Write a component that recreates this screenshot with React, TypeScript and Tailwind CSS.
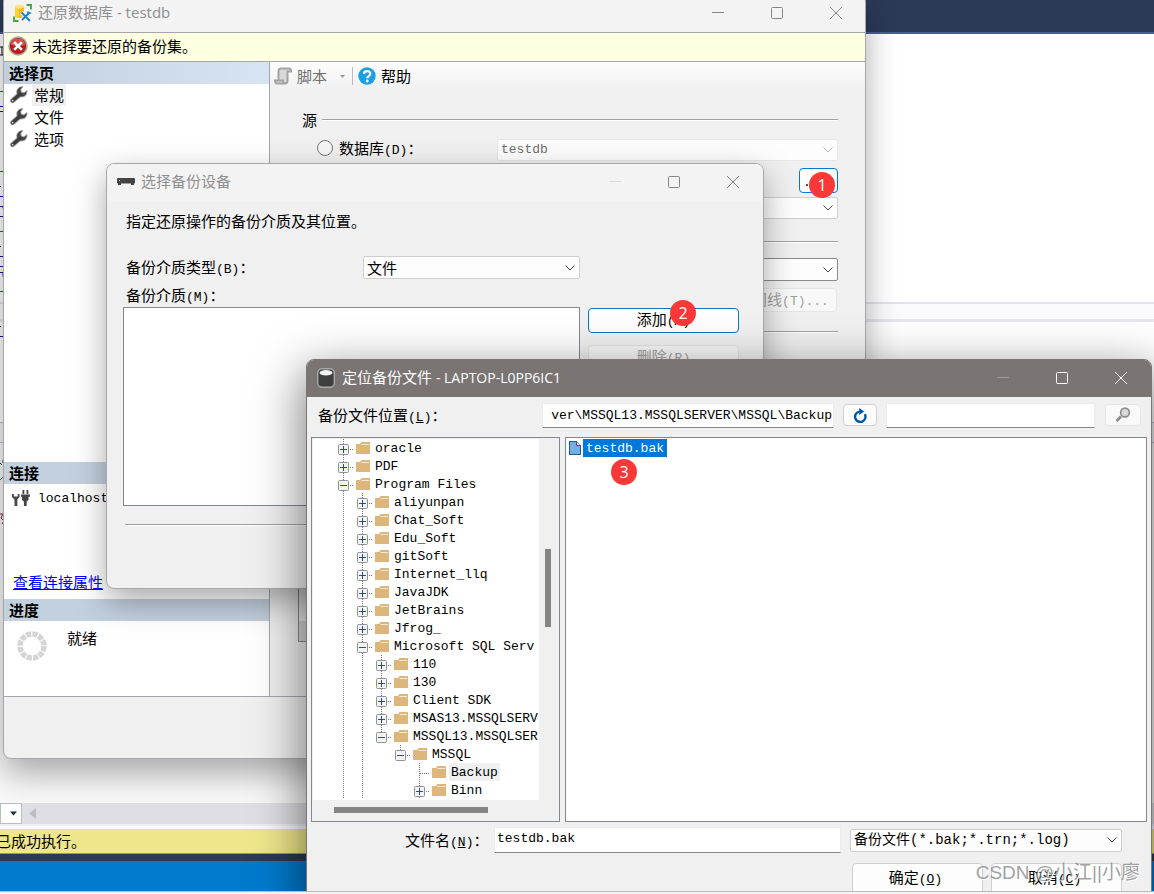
import type { ReactNode } from 'react'

const Latin = ({ children }: { children: ReactNode }) => (
  <span className="font-['Liberation_Mono','Noto_Sans_CJK_SC',monospace] text-[13px] leading-none">{children}</span>
)

const Chevron = ({ className }: { className: string }) => (
  <svg viewBox="0 0 12 12" className={`pointer-events-none absolute right-1 top-1/2 h-3 w-3 -translate-y-1/2 ${className}`} fill="none" stroke="currentColor">
    <path d="M1.5 3.5 6 8 10.5 3.5" />
  </svg>
)

function Select({ value, label, box, text, disabled }: { value: string; label: string; box: string; text: string; disabled?: boolean }) {
  return (
    <div className={`relative ${box}`}>
      <select
        aria-label={label}
        disabled={disabled}
        className={`block h-full w-full appearance-none rounded-[2px] border bg-[#fdfdfd] pl-[3px] pr-5 opacity-100 ${text}`}
      >
        <option>{value}</option>
      </select>
      <Chevron className={disabled ? 'text-[#b5b5b5]' : 'text-[#444]'} />
    </div>
  )
}

function WindowControls({ color, minColor }: { color: string; minColor: string }) {
  return (
    <div className="ml-auto flex h-full">
      <button aria-label="最小化" className={`grid w-[59px] place-items-center ${minColor}`}>
        <svg width="14" height="14" viewBox="0 0 14 14" stroke="currentColor"><path d="M1 6.5h12" /></svg>
      </button>
      <button aria-label="最大化" className={`grid w-[59px] place-items-center ${color}`}>
        <svg width="14" height="14" viewBox="0 0 14 14" fill="none" stroke="currentColor"><rect x="1.5" y="1.5" width="11" height="11" rx="1" /></svg>
      </button>
      <button aria-label="关闭" className={`grid w-[59px] place-items-center ${color}`}>
        <svg width="14" height="14" viewBox="0 0 14 14" stroke="currentColor"><path d="M1 1l12 12M13 1L1 13" /></svg>
      </button>
    </div>
  )
}

const Wrench = () => (
  <svg width="18" height="18" viewBox="0 0 18 18" className="shrink-0">
    <path d="M2.600 14.600 9 9" stroke="#9a9a9a" strokeWidth="5" strokeLinecap="round" />
    <path d="M12.800 .8A5.200 5.200 0 0 0 7 7.400c.6 3 3.400 4 5.800 3.400 2.600-.6 4.400-2.600 4.200-6.200l-3.200 2.300-2.700-.9-.3-2.700z" fill="#444" stroke="#9a9a9a" strokeWidth=".9" />
    <path d="M2.500 14.700 9.300 8.900" stroke="#3c3c3c" strokeWidth="3.400" strokeLinecap="round" />
    <circle cx="2.600" cy="14.600" r=".9" fill="#ddd" />
  </svg>
)

const PanelHead = ({ children, fade }: { children: ReactNode; fade?: boolean }) => (
  <h2 className={`h-[22px] pl-[5px] text-[15px] font-bold leading-[22px] ${fade ? 'bg-linear-to-r from-[#c1cfde] to-[#d7e5f3]' : 'bg-[#c3d0de]'}`}>{children}</h2>
)

const Rule = ({ className = '' }: { className?: string }) => (
  <div className={`h-[2px] border-t border-[#a0a0a0] bg-white ${className}`} />
)

function Editor() {
  return (
    <div className="flex h-full flex-col bg-white">
      <div className="h-[34px] shrink-0 border-b-2 border-[#4a5f8f] bg-[#2b3a57]" />
      <div className="h-[268px] shrink-0">
        <svg width="5" height="268" viewBox="0 34 5 268" fill="none">
          <path d="M0 47h5M0 55h5M2 47v8" stroke="#111" />
          <path d="M0 91.500h5M0 171.500h5M0 231.500h5M0 291.500h5" stroke="#078007" />
          <path d="M0 106.500h5M0 111.500h4v5M0 186.500h1M0 196.500h5M0 206.500h3v2M0 216.500h5M0 246.500h1M0 256.500h5M0 266.500h4v3M0 272.500h3v4" stroke="#11c" />
        </svg>
      </div>
      <div className="h-[2px] shrink-0 bg-[#e2e2ea]" />
      <div className="h-[15px] shrink-0 bg-[#fbfbfd]" />
      <div className="h-[3px] shrink-0 bg-[#e6e6ec]" />
      <div className="h-[100px] shrink-0 bg-white">
        <svg width="5" height="30" viewBox="0 322 5 30" fill="none"><path d="M0 326.500h1M0 336.500h5" stroke="#11c" /></svg>
      </div>
      <div className="h-[21px] shrink-0 border-y border-[#b9bccb] bg-[#f3f3f6]" />
      <div className="flex-1 bg-[#f8f8f8]">
        <svg width="5" height="90" viewBox="0 443 5 90" fill="none">
          <path d="M0 463l2 2M3 460v3" stroke="#222" />
          <path d="M0 480l3-3" stroke="#27a" />
          <path d="M0 514h3l-2 4 3 3-2 3" stroke="#824" />
        </svg>
      </div>
      <div className="flex h-[21px] shrink-0 bg-[#dedee4]">
        <div className="flex w-[22px] items-center justify-end border border-[#b5bccb] bg-white pr-1">
          <svg width="7" height="5" viewBox="0 0 7 5"><path d="M0 .5h7L3.500 4.500z" fill="#1b2b47" /></svg>
        </div>
        <svg width="22" height="21" viewBox="0 0 22 21"><path d="M14 5v11L7 10.500z" fill="#bcbcc4" /></svg>
      </div>
      <div className="h-[5px] shrink-0 border-t-2 border-[#eeeef2] bg-[#f8f8fa]" />
      <div className="h-[25px] shrink-0 border-b border-[#8f93a0] bg-[#efe68c] text-[15px] leading-[24px] text-black">
        <span className="-ml-1">已成功执行。</span>
      </div>
      <div className="h-[7px] shrink-0 bg-[#2b3a57]" />
      <div className="h-[30px] shrink-0 bg-[#007acc]" />
    </div>
  )
}

function RestoreWindow() {
  return (
    <section className="absolute -top-1.5 left-[3px] flex h-[765px] w-[863px] flex-col overflow-hidden rounded-lg border border-[#a6a6ac] bg-[#f0f0f0] shadow-[0_14px_32px_rgba(0,0,0,0.32)]">
      <header className="flex h-[37px] shrink-0 items-center bg-[#f3f3f3] pb-0.5 pl-[9px]">
        <svg width="20" height="20" viewBox="0 0 20 20">
          <path d="M2 3.500v10c0 2 9 2 9 0v-10z" fill="#fdb813" />
          <path d="M2 3.500h4v11.300c-2-.1-4-.5-4-1.300z" fill="#ffcf3f" />
          <ellipse cx="6.500" cy="3.500" rx="4.500" ry="2" fill="#ffe28a" />
          <path d="M13.500 2H18v4.500M1 13.500V18h4.500" fill="none" stroke="#3fa24c" strokeWidth="1.800" />
          <path d="M8.500 9.500 17 18M16.500 9.500 9 17" stroke="#f3f3f3" strokeWidth="4" />
          <path d="M8.500 9.500 17 18M16.500 9.500 9 17" stroke="#1a84cf" strokeWidth="1.900" />
          <path d="M14 9.500c2-1 3 0 4 1" stroke="#1a84cf" strokeWidth="1.500" fill="none" />
        </svg>
        <h1 className="pl-[5px] text-[15px] text-[#8f8f8f] font-['Open_Sans','Noto_Sans_CJK_SC',sans-serif]">
          还原数据库 - testdb
        </h1>
        <WindowControls color="text-[#858585]" minColor="text-[#858585]" />
      </header>
      <div className="flex h-[30px] shrink-0 items-center gap-1 border-y border-[#a5a5ac] bg-[#ffffe1] pb-0.5 pl-1 text-[15px]">
        <svg width="20" height="20" viewBox="0 0 19 19">
          <circle cx="9.500" cy="9.500" r="9.200" fill="#a5a5a5" />
          <circle cx="9.500" cy="9.500" r="7.700" fill="#c01818" />
          <path d="M2.500 8a7.200 7.200 0 0 1 14 0q-7 4-14 0z" fill="#dd6a6a" opacity=".7" />
          <path d="M5.800 5.800l7.400 7.400M13.200 5.800l-7.400 7.400" stroke="#fff" strokeWidth="2.600" />
        </svg>
        未选择要还原的备份集。
      </div>
      <div className="flex h-[635px] shrink-0 border-b border-[#a5a5ac]">
        <aside className="flex w-[266px] shrink-0 flex-col border-r border-[#a5a5ac] bg-white text-[15px]">
          <PanelHead fade>选择页</PanelHead>
          <ul>
            {['常规', '文件', '选项'].map((t, i) => (
              <li key={t} className="flex h-[22px] items-center gap-1 pl-[6px]">
                <Wrench />
                <span className={`h-[22px] px-[2px] leading-[22px] ${i === 0 ? 'bg-[#f0f0f0]' : ''}`}>{t}</span>
              </li>
            ))}
          </ul>
          <div className="mt-auto h-[137px]">
            <PanelHead>连接</PanelHead>
            <div className="flex h-[28px] items-center gap-2 pl-2">
              <svg width="18" height="16" viewBox="0 0 18 16" fill="#444">
                <path d="M0 4v3l2.500 2.500V16h2.800V9.500L7.500 7V4H5.800v2.500h-4V4zM9 4.500h9v2l-1.500.5v3l-1.800 1.500V16h-2.800v-4.500L10 10V7l-1-.5z" />
                <path d="M10.500 0h1.800v4h-1.800zM14.500 0h1.800v4h-1.800z" />
              </svg>
              <Latin>localhost</Latin>
            </div>
            <a href="#connection" className="ml-[9px] mt-[59px] inline-block leading-[22px] text-[#0000ff] underline">查看连接属性</a>
          </div>
          <PanelHead>进度</PanelHead>
          <div className="flex h-[75px] pl-[13px]">
            <svg width="30" height="30" viewBox="0 0 30 30" className="mt-2.5">
              <circle cx="15" cy="15" r="12" fill="none" stroke="#d5d5d5" strokeWidth="5.500" strokeDasharray="5.200 1.080" />
            </svg>
            <span className="pl-[20px] pt-[6px]">就绪</span>
          </div>
        </aside>
        <div className="flex flex-1 flex-col">
          <div className="flex h-7 shrink-0 items-center rounded-tr bg-linear-to-b from-[#fdfdfd] to-[#f0f0f0] pl-1 text-[15px]">
            <button className="flex items-center gap-[5px] text-[#6f6f6f]">
              <svg width="18" height="18" viewBox="0 0 18 18" fill="#d8d8d8" stroke="#a3a3a3" strokeWidth="2">
                <path d="M4.500 13V4c0-2 1-2.500 2.500-2.500h8.500c1 0 1.500 1 1.500 3h-3.500v9c0 2-1 3-2.500 3H3c-1.500 0-2-1-2-3h8c0 2 .5 3 2 3" />
              </svg>
              脚本
              <svg width="5" height="3" viewBox="0 0 7 4" className="ml-2"><path d="M0 0h7L3.500 4z" fill="#999" /></svg>
            </button>
            <span className="ml-[7px] h-[18px] w-px bg-[#bdbdbd]" />
            <button className="ml-[5px] flex items-center gap-[5px] text-black">
              <svg width="18" height="18" viewBox="0 0 18 18">
                <circle cx="9" cy="9" r="8.700" fill="#1ba1e2" />
                <path d="M6 7c0-4 6.200-3.800 6.200-.3C12.200 9 9.200 9 9.200 11.200" fill="none" stroke="#fff" strokeWidth="2.200" />
                <circle cx="9.200" cy="14" r="1.400" fill="#fff" />
              </svg>
              帮助
            </button>
          </div>
          <div className="flex flex-1 flex-col pl-8 pr-[27px] pt-[20px] text-[15px]">
            <div className="flex h-5 items-center gap-1">源<Rule className="ml-[1px] flex-1" /></div>
            <div className="mt-[9px] flex h-[22px] items-start justify-between pl-[15px]">
              <label className="flex h-[18px] items-center gap-[6px]">
                <input type="radio" name="source" className="h-4 w-4 appearance-none rounded-full border border-[#777] bg-[#f5f5f5]" />
                <span className="leading-[18px]">数据库<Latin>(D)</Latin>：</span>
              </label>
              <Select label="数据库" value="testdb" disabled box="h-[22px] w-[341px]" text="border-[#e6e6e6] font-['Liberation_Mono',monospace] text-[13px] text-[#6d6d6d]" />
            </div>
            <button aria-label="选择设备" className="ml-auto mt-[7px] h-[25px] w-[39px] rounded border border-[#0078d4] bg-[#fdfdfd] pl-[3px] text-left leading-none"><Latin>...</Latin></button>
            <Select label="源数据库" value="" box="mt-[4px] h-[22px]" text="border-[#cfcfcf] text-[13px]" />
            <Rule className="mt-[22px]" />
            <Select label="目标数据库" value="" box="mt-[15px] h-[23px]" text="border-[#8a8a8a] text-[13px]" />
            <button disabled className="ml-auto mr-px mt-[7px] h-6 w-[108px] rounded border border-[#e6e6e6] bg-[#f8f8f8] pb-0.5 leading-none text-[#a0a0a0]">时间线<Latin>(T)...</Latin></button>
            <Rule className="mt-[19px]" />
            <div className="-ml-1 mt-auto mb-[54px] h-[190px] border border-[#8a8a94] bg-[#f0f0f0]">
              <div className="mt-[168px] h-5 bg-[#d8d8d8]" />
            </div>
          </div>
        </div>
      </div>
    </section>
  )
}

function DeviceWindow() {
  return (
    <section className="absolute left-[106px] top-[163px] flex h-[426px] w-[658px] flex-col overflow-hidden rounded-lg border border-[#a8a8a8] bg-[#f0f0f0] shadow-[0_12px_32px_rgba(0,0,0,0.34)]">
      <header className="flex h-[37px] shrink-0 items-center bg-[#f3f3f3] pb-0.5 pl-2.5 pr-px">
        <svg width="18" height="7" viewBox="0 0 18 7"><rect width="18" height="5.500" rx="1" fill="#444" /><path d="M1 5h3v2H1zM14 5h3v2h-3z" fill="#444" /><path d="M2 2h1v1H2z" fill="#ccc" /></svg>
        <h1 className="pl-[6px] text-[15px] text-[#8f8f8f]">选择备份设备</h1>
        <WindowControls color="text-[#858585]" minColor="text-[#dadada]" />
      </header>
      <div className="flex flex-col pl-4 pr-[24px] text-[15px]">
        <p className="mt-[11px] h-5 pl-[3px] leading-[18px]">指定还原操作的备份介质及其位置。</p>
        <div className="mt-[24px] flex h-[23px] items-center pl-[3px]">
          <label className="w-[237px]">备份介质类型<Latin>(B)</Latin>：</label>
          <Select label="备份介质类型" value="文件" box="h-[23px] w-[217px]" text="border-[#cfcfcf] text-[15px]" />
        </div>
        <div className="mt-[6px] h-5 pl-[3px] leading-[20px]">备份介质<Latin>(M)</Latin>：</div>
        <div className="mt-[2px] flex gap-2">
          <div className="h-[199px] w-[457px] shrink-0 border border-[#828790] bg-white" />
          <div className="flex flex-1 flex-col gap-3 pt-px">
            <button className="h-[25px] rounded border border-[#0078d4] bg-[#fdfdfd] pb-0.5 leading-none">添加<Latin>(A)</Latin></button>
            <button disabled className="h-[25px] rounded border border-[#e4e4e4] bg-[#f8f8f8] pb-0.5 leading-none text-[#a0a0a0]">删除<Latin>(R)</Latin></button>
          </div>
        </div>
        <Rule className="ml-[2px] mt-[18px]" />
      </div>
    </section>
  )
}

type Node = { name: string; depth: number; state: '+' | '-' | ''; lines: number[] }
const tree: Node[] = [
  { name: 'oracle', depth: 0, state: '+', lines: [] },
  { name: 'PDF', depth: 0, state: '+', lines: [] },
  { name: 'Program Files', depth: 0, state: '-', lines: [] },
  ...['aliyunpan', 'Chat_Soft', 'Edu_Soft', 'gitSoft', 'Internet_llq', 'JavaJDK', 'JetBrains', 'Jfrog_'].map(
    (name): Node => ({ name, depth: 1, state: '+', lines: [0] }),
  ),
  { name: 'Microsoft SQL Serv', depth: 1, state: '-', lines: [0] },
  { name: '110', depth: 2, state: '+', lines: [0, 1] },
  { name: '130', depth: 2, state: '+', lines: [0, 1] },
  { name: 'Client SDK', depth: 2, state: '+', lines: [0, 1] },
  { name: 'MSAS13.MSSQLSERV', depth: 2, state: '+', lines: [0, 1] },
  { name: 'MSSQL13.MSSQLSER', depth: 2, state: '-', lines: [0, 1] },
  { name: 'MSSQL', depth: 3, state: '-', lines: [0, 1] },
  { name: 'Backup', depth: 4, state: '', lines: [0, 1] },
  { name: 'Binn', depth: 4, state: '+', lines: [0, 1] },
]

function TreeRow({ node }: { node: Node }) {
  const last = node.name === 'MSSQL' || node.name.startsWith('MSSQL13')
  return (
    <li className="flex h-[18px] items-center whitespace-nowrap">
      {Array.from({ length: node.depth }, (_, i) => (
        <svg key={i} width="19" height="18" viewBox="0 0 19 18" className="shrink-0">
          {node.lines.includes(i) && <path d="M9.500 0v18" stroke="#777" strokeDasharray="1 1" />}
        </svg>
      ))}
      <svg width="22" height="18" viewBox="0 0 22 18" className="shrink-0" fill="none">
        <path d={last ? 'M9.5 0v10' : 'M9.5 0v18'} stroke="#777" strokeDasharray="1 1" />
        <path d="M10 10.500h10" stroke="#777" strokeDasharray="1 1" />
        {node.state && (
          <>
            <rect x="4.500" y="5.500" width="10" height="10" rx="1" fill="#f4f4f4" stroke="#919191" />
            <path d={node.state === '+' ? 'M6 10.5h7M9.5 7v7' : 'M6 10.5h7'} stroke="#2c4a9c" />
          </>
        )}
      </svg>
      <svg width="14" height="12" viewBox="0 0 14 12" className="shrink-0">
        <path d="M0 2h4l1.500-2H14v12H0z" fill="#dcb67a" />
        <path d="M5.500 2.500h7.500" stroke="#f6ead3" />
      </svg>
      <span className={`ml-[3px] h-[18px] px-[2px] leading-[19px] ${node.name === 'Backup' ? 'bg-[#f0f0f0]' : ''}`}>{node.name}</span>
    </li>
  )
}

const field = "border border-[#ececec] border-b-[#868686] bg-white font-['Liberation_Mono',monospace] text-[13px] outline-none"

function LocateWindow() {
  return (
    <section className="absolute left-[306px] top-[359px] flex h-[560px] w-[846px] flex-col overflow-hidden rounded-lg border border-[#7a7473] bg-[#f0f0f0] shadow-[0_16px_48px_4px_rgba(0,0,0,0.5)]">
      <header className="flex h-[37px] shrink-0 items-center bg-[#7a7473] pb-0.5 pl-2.5 pr-px text-white">
        <svg width="18" height="20" viewBox="0 0 18 20">
          <rect x=".7" y=".7" width="16.600" height="18.600" rx="4.500" fill="#3f3f3f" stroke="#aaa" strokeWidth="1.400" />
          <ellipse cx="9" cy="4.800" rx="6.500" ry="2.700" fill="#f2f2f2" />
        </svg>
        <h1 className="pl-[7px] text-[15px] font-['Open_Sans','Noto_Sans_CJK_SC',sans-serif]">
          定位备份文件 <span className="text-[14px]">- LAPTOP-L0PP6IC1</span>
        </h1>
        <WindowControls color="text-white" minColor="text-[#a19c9b]" />
      </header>
      <div className="flex h-9 shrink-0 items-center pl-[11px] pr-2.5 text-[15px]">
        <label htmlFor="location" className="w-[224px]">备份文件位置<Latin>(<u>L</u>)</Latin>：</label>
        <input id="location" readOnly className={`${field} h-[25px] w-[292px] px-px text-right`} defaultValue="ver\MSSQL13.MSSQLSERVER\MSSQL\Backup" />
        <button aria-label="刷新" className="ml-[9px] grid h-[22px] w-[34px] place-items-center rounded border border-[#cfcfcf] bg-[#fdfdfd]">
          <svg width="14" height="15" viewBox="0 0 14 15">
            <path d="M11.800 6.200A5.200 5.200 0 1 1 6.500 3.600" fill="none" stroke="#0055a5" strokeWidth="2.400" />
            <path d="M6.200 0v7l5-3.500z" fill="#0055a5" />
          </svg>
        </button>
        <input aria-label="搜索" className={`${field} ml-[9px] h-[25px] min-w-0 flex-1`} />
        <button aria-label="查找" disabled className="ml-[10px] grid h-[22px] w-9 place-items-center rounded border border-[#e6e6e6] bg-[#f9f9f9]">
          <svg width="16" height="16" viewBox="0 0 16 16" fill="#d8d8d8" stroke="#8a8a8a">
            <path d="M1.500 14 6 9.500" strokeWidth="2.800" />
            <circle cx="10" cy="5.500" r="4.400" strokeWidth="1.600" />
          </svg>
        </button>
      </div>
      <div className="mt-1 flex h-[385px] shrink-0 gap-[5px] pl-1 pr-1 font-['Liberation_Mono',monospace] text-[13px]">
        <div className="flex w-[249px] shrink-0 flex-col border border-[#828790] bg-[#f0f0f0] p-px">
          <div className="flex h-[361px] bg-[#f0f0f0]">
            <ul className="w-[226px] overflow-hidden bg-white pl-[21px]">
              {tree.map((n) => <TreeRow key={n.name} node={n} />)}
            </ul>
            <div className="ml-[6px] mt-[110px] h-[78px] w-[6px] bg-[#858585]" />
          </div>
          <div className="ml-[21px] mt-[7px] h-[6px] w-[154px] bg-[#858585]" />
        </div>
        <div className="flex-1 border border-[#828790] bg-white p-px">
          <div className="flex h-[18px] items-center pl-[2px]">
            <svg width="12" height="14" viewBox="0 0 12 14"><path d="M.5.500h7l4 4v9H.5z" fill="#75aee0" stroke="#1c5a90" /><path d="M7.500.500v4h4" fill="#d8e9f7" stroke="#1c5a90" /></svg>
            <span className="ml-[2px] h-[18px] bg-[#0078d7] px-[3px] leading-[19px] text-white">testdb.bak</span>
          </div>
        </div>
      </div>
      <div className="mt-[5px] flex h-[26px] shrink-0 items-center pl-[98px] pr-[29px] text-[15px]">
        <label htmlFor="filename" className="w-[89px]">文件名<Latin>(<u>N</u>)</Latin>：</label>
        <input id="filename" className={`${field} h-[26px] min-w-0 flex-1 pb-1 pl-[2px]`} defaultValue="testdb.bak" />
        <Select label="文件类型" value="备份文件(*.bak;*.trn;*.log)" box="ml-[9px] h-[23px] w-[272px]" text="border-[#cfcfcf] font-['Liberation_Mono','Noto_Sans_CJK_SC',monospace] text-[14px]" />
      </div>
      <div className="mt-2.5 flex shrink-0 justify-end gap-2 pr-[29px] text-[15px]">
        <button className="h-8 w-[131px] rounded border border-[#d0d0d0] bg-[#fdfdfd] pr-1 pb-1">确定<Latin>(<u>O</u>)</Latin></button>
        <button className="h-8 w-[131px] rounded border border-[#d0d0d0] bg-[#fdfdfd] pr-1 pb-1">取消<Latin>(<u>C</u>)</Latin></button>
      </div>
    </section>
  )
}

const Badge = ({ n, at }: { n: number; at: string }) => (
  <span className={`absolute grid h-[26px] w-[26px] place-items-center rounded-full bg-[#fb3838] font-['Open_Sans',sans-serif] text-[16px] leading-none text-white ${at}`}>{n}</span>
)

export default function App() {
  return (
    <main className="flex h-screen flex-col overflow-hidden bg-[#f3f3f3] text-black font-['Noto_Sans_CJK_SC',sans-serif]">
      <div className="relative min-h-0 flex-1 overflow-hidden">
        <Editor />
        <RestoreWindow />
        <DeviceWindow />
        <LocateWindow />
        <Badge n={1} at="left-[809px] top-[172px]" />
        <Badge n={2} at="left-[670px] top-[300px]" />
        <Badge n={3} at="left-[611px] top-[459px]" />
        <span className="pointer-events-none absolute bottom-1 right-[14px] whitespace-nowrap font-['Liberation_Sans','Noto_Sans_CJK_SC',sans-serif] text-[19px] leading-[28px] text-[#777]/70 [text-shadow:1px_1px_0_#fff]">CSDN @小江||小廖</span>
      </div>
      <div className="h-[3px] shrink-0 border-t border-[#b8b8b8] bg-[#f3f3f3]" />
    </main>
  )
}
